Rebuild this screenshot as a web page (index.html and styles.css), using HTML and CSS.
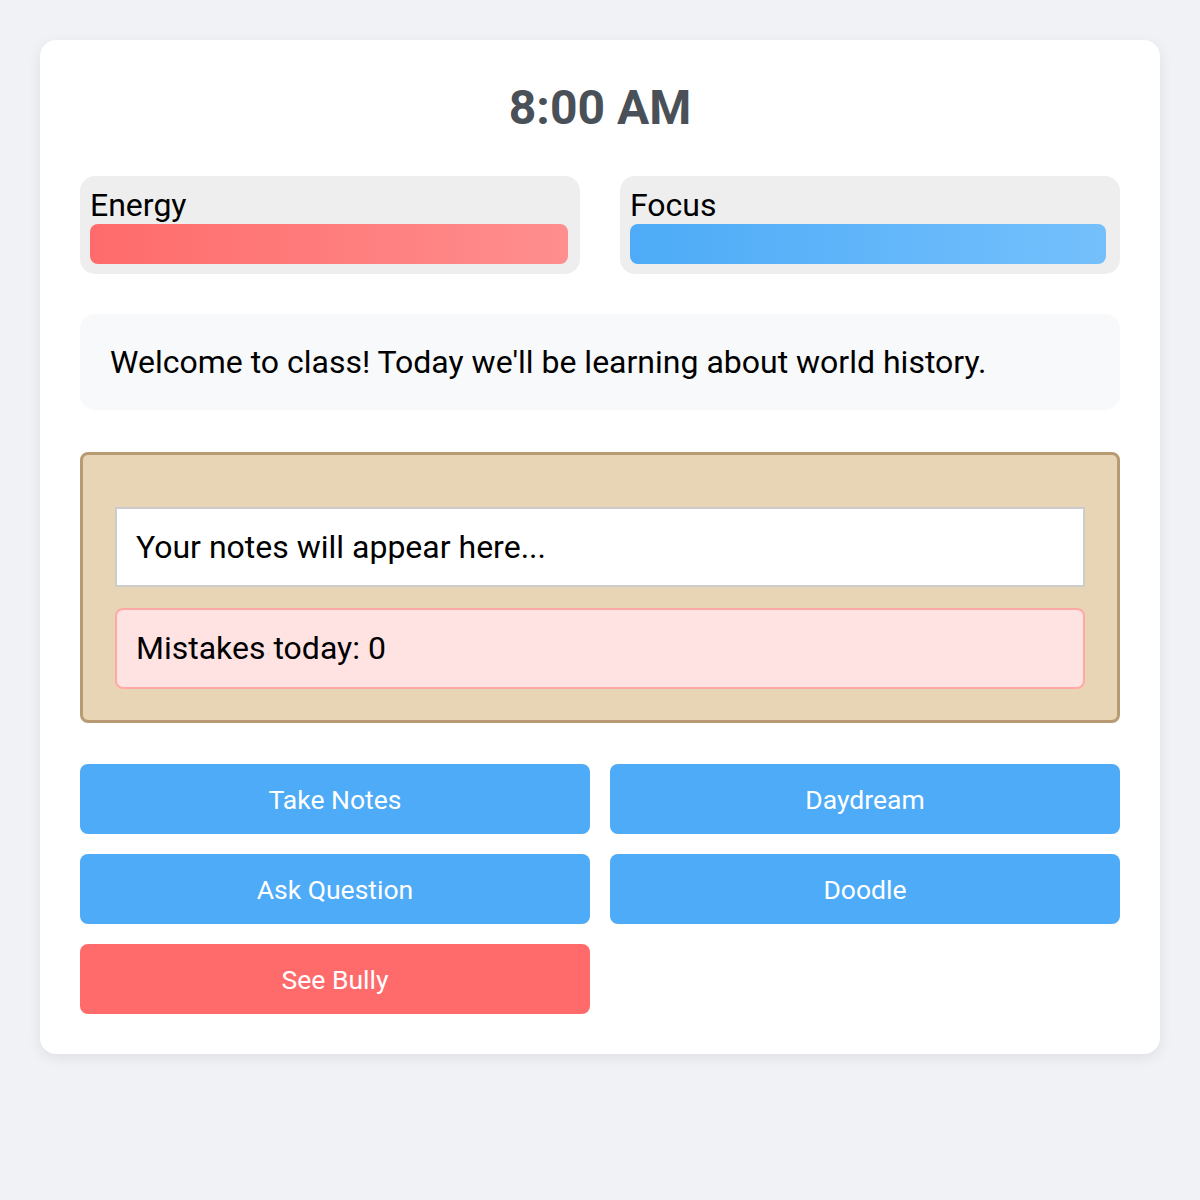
FILE: index.html
```html
<!DOCTYPE html>
<html lang="en">
<head>
<meta charset="utf-8">
<title>Classroom</title>
<link rel="stylesheet" href="styles.css">
</head>
<body>
<main class="card">
  <h1 class="clock">8:00 AM</h1>
  <section class="stats">
    <div class="stat">
      <div class="stat-label">Energy</div>
      <div class="bar bar-energy" style="width: 100%"></div>
    </div>
    <div class="stat">
      <div class="stat-label">Focus</div>
      <div class="bar bar-focus" style="width: 99.6%"></div>
    </div>
  </section>
  <div class="message">Welcome to class! Today we'll be learning about world history.</div>
  <section class="notebook">
    <div class="notes">Your notes will appear here...</div>
    <div class="mistakes">Mistakes today: 0</div>
  </section>
  <section class="actions">
    <button class="btn">Take Notes</button>
    <button class="btn">Daydream</button>
    <button class="btn">Ask Question</button>
    <button class="btn">Doodle</button>
    <button class="btn btn-danger">See Bully</button>
  </section>
</main>
</body>
</html>
```
FILE: styles.css
```css
* { box-sizing: border-box; }
html, body { margin: 0; padding: 0; }
body {
  background: #f0f2f5;
  font-family: Roboto, "Liberation Sans", Arial, sans-serif;
  color: #000;
  padding: 40px;
}
.card {
  background: #fff;
  border-radius: 16px;
  box-shadow: 0 4px 14px rgba(0,0,0,0.08);
  padding: 40px;
}
.clock {
  margin: 0 0 40px;
  text-align: center;
  font-size: 48px;
  font-weight: 700;
  color: #495057;
  line-height: 56px;
}
.stats {
  display: flex;
  gap: 40px;
  margin-bottom: 40px;
}
.stat {
  flex: 1;
  background: #eeeeee;
  border-radius: 15px;
  padding: 10px 12px 10px 10px;
}
.stat-label {
  font-size: 32px;
  line-height: 38px;
}
.bar {
  height: 40px;
  border-radius: 8px;
}
.bar-energy { background: linear-gradient(90deg, #ff6b6b, #ff8e8e); }
.bar-focus { background: linear-gradient(90deg, #4dabf7, #74c0fc); }
.message {
  background: #f8f9fa;
  border-radius: 15px;
  padding: 30px;
  font-size: 32px;
  line-height: 36px;
  margin-bottom: 42px;
}
.notebook {
  background: #e8d5b5;
  border: 3px solid #b89b72;
  border-radius: 8px;
  padding: 52px 32px 31px;
  display: flex;
  flex-direction: column;
  gap: 21px;
  margin-bottom: 41px;
}
.notes {
  background: #fff;
  border: 2px solid #ccc;
  padding: 20px 19px;
  font-size: 32px;
  line-height: 36px;
}
.mistakes {
  background: #ffe3e3;
  border: 2px solid #ffa8a8;
  border-radius: 8px;
  padding: 20px 19px;
  font-size: 32px;
  line-height: 37px;
}
.actions {
  display: grid;
  grid-template-columns: 1fr 1fr;
  gap: 20px;
}
.btn {
  height: 70px;
  border: none;
  border-radius: 8px;
  background: #4dabf7;
  color: #fff;
  font-family: Roboto, "Liberation Sans", Arial, sans-serif;
  font-size: 26.5px;
  cursor: pointer;
}
.btn-danger { background: #ff6b6b; }
```
